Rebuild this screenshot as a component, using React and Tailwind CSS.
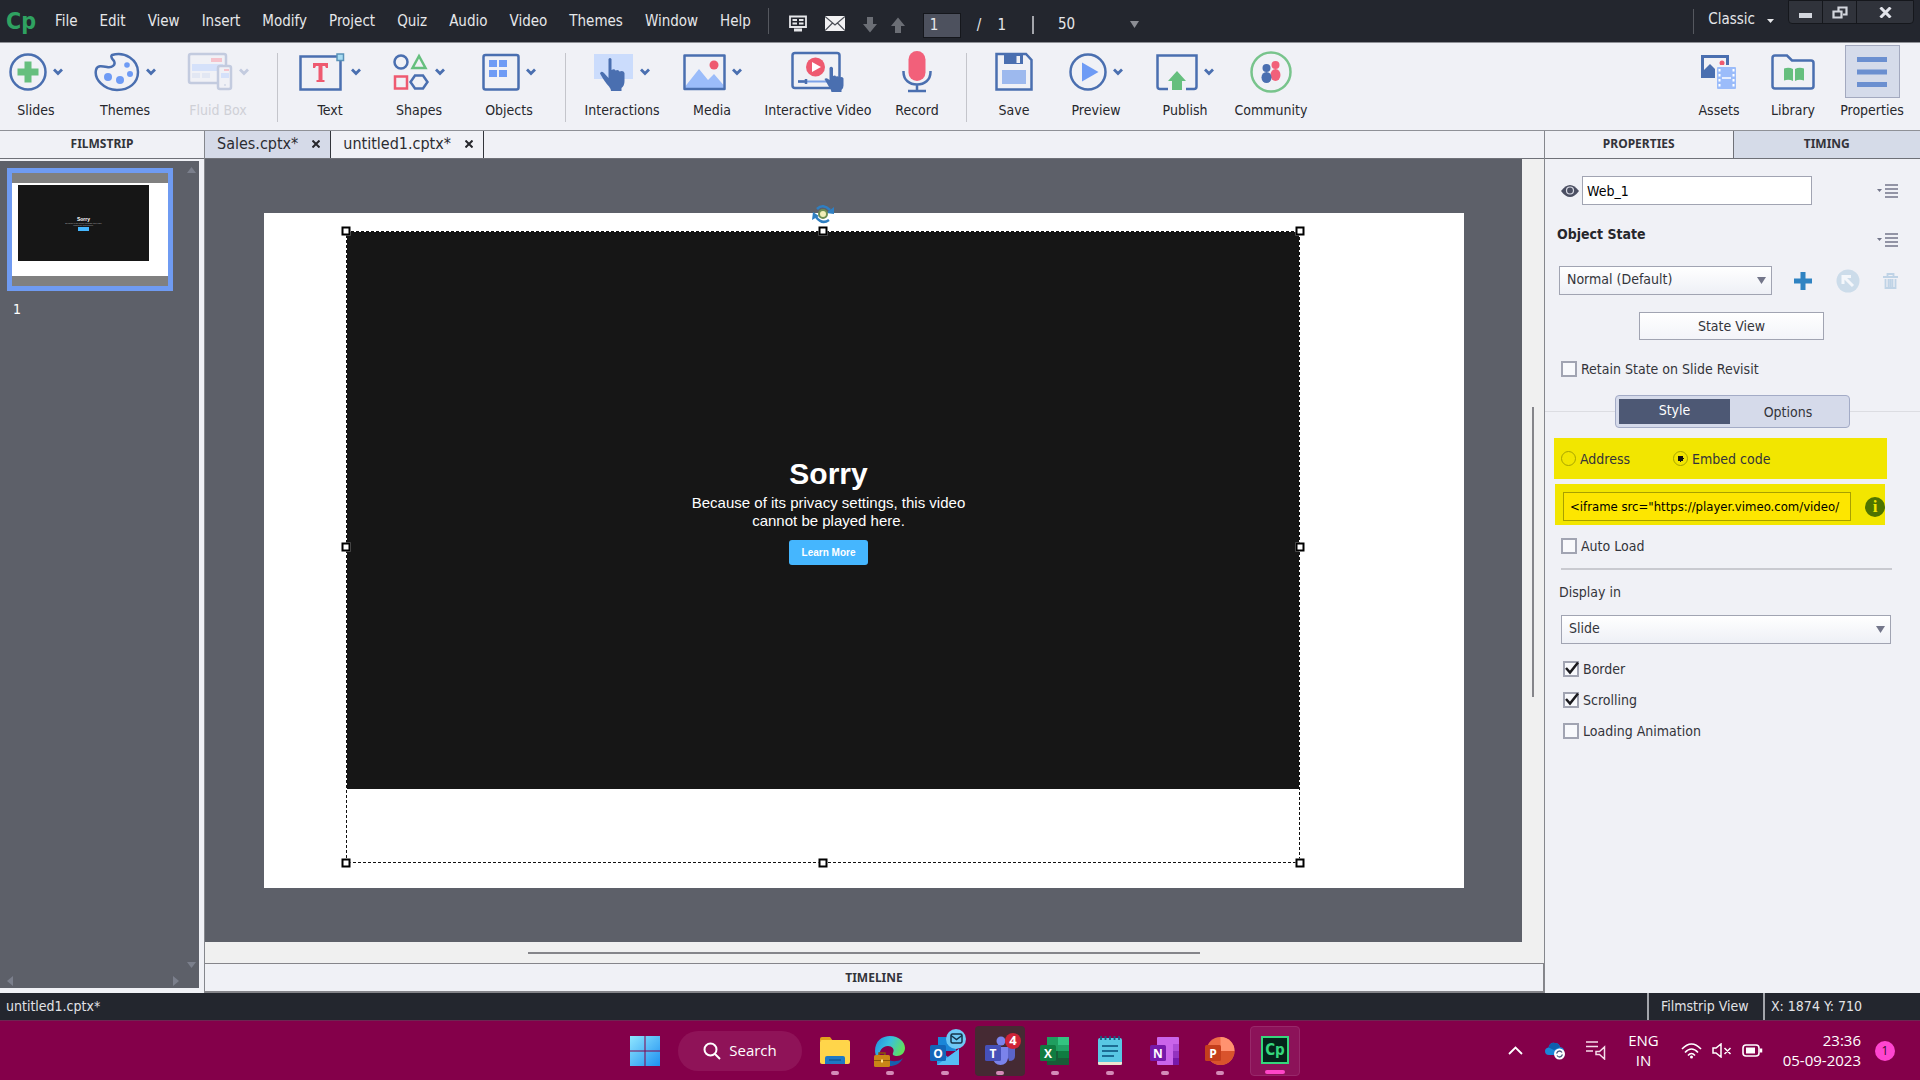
import React, { useState } from "react";

const menus = ["File", "Edit", "View", "Insert", "Modify", "Project", "Quiz", "Audio", "Video", "Themes", "Window", "Help"];

const uiFont = "font-['DejaVu_Sans_Condensed','DejaVu_Sans',sans-serif]";

const icons = {
  slides: (
    <svg width="38" height="40" viewBox="0 0 38 40" fill="none">
      <circle cx="19" cy="20" r="17.5" stroke="#4a6fb0" strokeWidth="2.5" />
      <path d="M15.5 9.500h7v7h7v7h-7v7h-7v-7h-7v-7h7z" fill="#66bf7e" />
    </svg>
  ),
  themes: (
    <svg width="46" height="40" viewBox="0 0 46 40" fill="none">
      <path d="M18 3C31 -1 44 8 44 20C44 31 35 38 23 38C10 38 0 27 2 18C3 13 8 14 13 15C18 16 22 13 20 9C18 7 16 5 18 3Z" stroke="#4a6fb0" strokeWidth="2.5" />
      <circle cx="14" cy="25" r="4" fill="#6e9bf5" />
      <circle cx="26" cy="28" r="4" fill="#6e9bf5" />
      <circle cx="36" cy="22" r="3" fill="#6e9bf5" />
      <circle cx="33" cy="13" r="2.800" fill="#6e9bf5" />
    </svg>
  ),
  fluid: (
    <svg width="46" height="40" viewBox="0 0 46 40" fill="none">
      <rect x="2" y="2" width="37" height="29" rx="2" stroke="#c3cbdf" strokeWidth="2.500" />
      <path d="M24 6h11v4H24z" fill="#f5c3cc" />
      <path d="M5 12h31v7H5z" fill="#d5e1fa" />
      <path d="M5 21h8v5H5zM15 21h8v5h-8z" fill="#e2e7f3" />
      <rect x="31" y="14" width="13" height="23" rx="2" fill="#f0f1f6" stroke="#c3cbdf" strokeWidth="2.500" />
      <path d="M37 17h5v2h-5z" fill="#f5c3cc" />
      <path d="M34 21h8v5h-8z" fill="#d5e1fa" />
      <path d="M37 33h2" stroke="#c3cbdf" />
    </svg>
  ),
  text: (
    <svg width="46" height="40" viewBox="0 0 46 40" fill="none">
      <path d="M1.500 4.500h40v33h-40z" stroke="#4a6fb0" strokeWidth="2.500" />
      <path d="M14 11h15v5h-2l-1-2h-2.500v14h2v2h-8v-2h2V14H17l-1 2h-2z" fill="#ee5a70" />
      <path d="M38 2h6.500v6.500H38z" fill="#a8dcf2" stroke="#5a92b8" strokeWidth="1.500" />
    </svg>
  ),
  shapes: (
    <svg width="36" height="40" viewBox="0 0 36 40" fill="none" strokeWidth="2.500">
      <circle cx="8" cy="10" r="6.500" stroke="#4a6fb0" />
      <path d="M26 4l6.500 12h-13z" stroke="#66bf7e" />
      <path d="M2 24.500h12v12H2z" stroke="#ee5a70" />
      <path d="M22 23.500h8l4.500 6.500-4.500 6.500h-8L17.500 30z" stroke="#4a6fb0" />
    </svg>
  ),
  objects: (
    <svg width="38" height="40" viewBox="0 0 38 40" fill="none">
      <rect x="1.500" y="3" width="35" height="34.500" rx="2" stroke="#4a6fb0" strokeWidth="2.500" />
      <path d="M7 8h8v7H7zM17 8h8v7h-8zM7 18h8v7H7zM17 18h8v7h-8z" fill="#6e9bf5" />
    </svg>
  ),
  interactions: (
    <svg width="40" height="40" viewBox="0 0 40 40">
      <path d="M0 2h39v25H0z" fill="#cbdcfc" />
      <path d="M14.500 7q1.500-2 3 0v11q3-1.500 4 .5 3-1.500 4 1 4-1.500 5 1.500v8q0 5-3 7v3H17q0-2-2-4.500-4-4-9-13 1-3 4-.5l4.500 5z" fill="#4a6fb0" />
    </svg>
  ),
  media: (
    <svg width="43" height="40" viewBox="0 0 43 40" fill="none">
      <path d="M2.500 34L16 17l9 11 6-6 9.500 11v3h-38z" fill="#9bbcfa" />
      <path d="M1.500 3.500h40V37h-40z" stroke="#4a6fb0" strokeWidth="2.500" strokeLinejoin="round" />
      <circle cx="31" cy="13" r="4.500" fill="#ee5a70" />
    </svg>
  ),
  video: (
    <svg width="54" height="42" viewBox="0 0 54 42" fill="none">
      <rect x="1.500" y="2" width="47" height="35" rx="2.500" stroke="#4a6fb0" strokeWidth="2.500" />
      <circle cx="24.500" cy="16" r="9.500" fill="#ee5a70" />
      <path d="M21 11l9 5-9 5z" fill="#fff" />
      <path d="M7 30.500h30" stroke="#7da2e8" strokeWidth="2" />
      <path d="M7 30.500h9M15 28v5" stroke="#4a6fb0" strokeWidth="2.500" />
      <path d="M38.500 17q1.500-2.500 3.500 0v8q2.500-1 3 .5 2.500-1 3 1 4-1.500 4.500 1v7q0 3-2 4.500V41h-10q-1-4-3-6l-4-7q2-2 5 1z" fill="#4a6fb0" />
    </svg>
  ),
  record: (
    <svg width="30" height="42" viewBox="0 0 30 42" fill="none">
      <rect x="6.500" y="0" width="17" height="30" rx="8.500" fill="#f2607a" />
      <path d="M1.500 20v1c0 8 6 12.500 13.500 12.500S28.500 29 28.500 21v-1M15 33.500V40M6 40h18" stroke="#4a6fb0" strokeWidth="2.500" />
    </svg>
  ),
  save: (
    <svg width="38" height="40" viewBox="0 0 38 40" fill="none">
      <path d="M1.500 2H31l5.500 6v29.500h-35z" stroke="#4a6fb0" strokeWidth="2.500" />
      <path d="M9 2h19v10H9z" fill="#4a6fb0" />
      <path d="M21.500 4H25v7h-3.500z" fill="#f0f1f6" />
      <path d="M7 18h24v14H7z" fill="#9db9ee" />
    </svg>
  ),
  preview: (
    <svg width="38" height="40" viewBox="0 0 38 40" fill="none">
      <circle cx="19" cy="20" r="17.500" stroke="#4a6fb0" strokeWidth="2.500" />
      <path d="M13 10.500L29.500 20 13 29.500z" fill="#6e9bf5" />
    </svg>
  ),
  publish: (
    <svg width="42" height="40" viewBox="0 0 42 40" fill="none">
      <path d="M12 37H4q-2.500 0-2.500-2.500V3.500h39v31q0 2.500-2.500 2.500h-8" stroke="#4a6fb0" strokeWidth="2.500" />
      <path d="M21 19l9 10h-4v9H16v-9h-4z" fill="#66bf7e" />
    </svg>
  ),
  community: (
    <svg width="42" height="42" viewBox="0 0 42 42" fill="none">
      <circle cx="21" cy="21" r="19.500" stroke="#78c48c" strokeWidth="2.500" />
      <circle cx="25.500" cy="14" r="4" fill="#f2607a" />
      <ellipse cx="25.500" cy="24" rx="5" ry="6" fill="#f2607a" />
      <circle cx="16.500" cy="17" r="4" fill="#4a6fb0" />
      <ellipse cx="16.500" cy="26.500" rx="5" ry="5.500" fill="#4a6fb0" />
    </svg>
  ),
  assets: (
    <svg width="36" height="36" viewBox="0 0 36 36">
      <path fillRule="evenodd" d="M0 1h28v23H0zM3 4h22v12l-12 0-4-4-6 5z" fill="#4a6fb0" />
      <path d="M3 16l6-6 5 5v9H3z" fill="#4a6fb0" />
      <circle cx="21" cy="9" r="2.500" fill="#ee5a70" />
      <rect x="14" y="11" width="22" height="24" fill="#f0f1f6" />
      <rect x="16" y="13" width="19" height="22" rx="1" fill="#9bbcfa" />
      <path d="M18.500 15v18M32.500 15v18" stroke="#fff" strokeWidth="2" strokeDasharray="2.500 2.500" />
      <path d="M21 24h9" stroke="#fff" strokeWidth="1.500" />
    </svg>
  ),
  library: (
    <svg width="44" height="36" viewBox="0 0 44 36" fill="none">
      <path d="M4 1.500h12l5 5h19q2.500 0 2.500 2.500v23q0 2.500-2.500 2.500H4q-2.500 0-2.500-2.500V4Q1.500 1.500 4 1.500z" stroke="#4a6fb0" strokeWidth="2.500" />
      <path d="M13 14.500q5-1.500 9 .5v12q-4-2-9-.5zM24 15q4-2 9-.5v12q-5-1.500-9 .5z" fill="#66bf7e" />
    </svg>
  ),
  properties: (
    <svg width="30" height="32" viewBox="0 0 30 32">
      <path d="M0 1h30v5H0zM0 13.500h30v5H0zM0 26h30v5H0z" fill="#6b8fd0" />
    </svg>
  ),
};

const tools = [
  { label: "Slides", icon: "slides", caret: true, width: "w-[72px]" },
  { label: "Themes", icon: "themes", caret: true, width: "w-[106px]" },
  { label: "Fluid Box", icon: "fluid", caret: true, width: "w-[80px]", disabled: true },
  { divider: true, width: "w-[38px]" },
  { label: "Text", icon: "text", caret: true, width: "w-[68px]" },
  { label: "Shapes", icon: "shapes", caret: true, width: "w-[110px]" },
  { label: "Objects", icon: "objects", caret: true, width: "w-[70px]" },
  { divider: true, width: "w-[42px]" },
  { label: "Interactions", icon: "interactions", caret: true, width: "w-[72px]" },
  { label: "Media", icon: "media", caret: true, width: "w-[108px]" },
  { label: "Interactive Video", icon: "video", width: "w-[104px]" },
  { label: "Record", icon: "record", width: "w-[94px]" },
  { divider: true, width: "w-[4px]" },
  { label: "Save", icon: "save", width: "w-[92px]" },
  { label: "Preview", icon: "preview", caret: true, width: "w-[72px]" },
  { label: "Publish", icon: "publish", caret: true, width: "w-[106px]" },
  { label: "Community", icon: "community", width: "w-[66px]" },
];

const rightTools = [
  { label: "Assets", icon: "assets", width: "w-[74px]" },
  { label: "Library", icon: "library", width: "w-[74px]" },
  { label: "Properties", icon: "properties", width: "w-[84px]", active: true },
];

function Tool({ tool }) {
  if (tool.divider) {
    return (
      <div className={`flex shrink-0 justify-center py-2 ${tool.width}`}>
        <div className="w-px bg-[#c4c5cb]" />
      </div>
    );
  }
  return (
    <button disabled={tool.disabled} className={`flex shrink-0 flex-col items-center whitespace-nowrap ${tool.width}`}>
      <span
        className={`flex h-[53px] items-center gap-1.5 ${tool.active ? "w-[55px] justify-center border border-[#a3a9bf] bg-[#d5dbea]" : ""}`}
      >
        {icons[tool.icon]}
        {tool.caret && (
          <svg width="10" height="8" viewBox="0 0 10 8" fill="none">
            <path d="M1 1.500l4 4 4-4" stroke={tool.disabled ? "#c3cbdf" : "#4a6fb0"} strokeWidth="2.800" />
          </svg>
        )}
      </span>
      <span className={`pt-[3px] text-[14px] leading-[18px] ${tool.disabled ? "text-[#cfd0d6]" : "text-[#26272c]"}`}>{tool.label}</span>
    </button>
  );
}

function TitleBar() {
  return (
    <header className="flex h-[42px] shrink-0 items-center bg-[#23262e] text-[15px] leading-5 text-[#e6e7ea]">
      <span className="w-[44px] pl-1.5 text-[23px] leading-6 font-bold text-[#2fa261]">Cp</span>
      <nav className="flex">
        {menus.map((menu) => (
          <button key={menu} className="px-[11px]">
            {menu}
          </button>
        ))}
      </nav>
      <div className="ml-1.5 h-[26px] w-px bg-[#55585f]" />
      <div className="flex items-center gap-[18px] pt-1 pl-5">
        <button aria-label="Layout">
          <svg width="18" height="17" viewBox="0 0 18 17" fill="none" stroke="#e6e7ea" strokeWidth="1.800">
            <path d="M1 1.500h16v10.500H1zM3.500 5h4.500M10 5h4.500M3.500 8.500h4.500M10 8.500h4.500" />
            <path d="M5 15h8" strokeWidth="3" />
          </svg>
        </button>
        <button aria-label="Mail">
          <svg width="20" height="15" viewBox="0 0 20 15" fill="none">
            <path d="M0 0h20v15H0z" fill="#f2f2f4" />
            <path d="M0 .5l10 8.500L20 .5M0 14.500L7.500 7M20 14.500L12.500 7" stroke="#4b4e56" strokeWidth="1.200" />
          </svg>
        </button>
        <div className="flex items-center gap-[14px] pt-1">
          <svg width="14" height="16" viewBox="0 0 14 16" fill="#6b6e75">
            <path d="M4 0h6v7h4l-7 8.500L0 7h4z" />
          </svg>
          <svg width="14" height="16" viewBox="0 0 14 16" fill="#6b6e75">
            <path d="M4 16h6V9h4L7 .5 0 9h4z" />
          </svg>
        </div>
        <div className="flex items-center pt-1">
          <input aria-label="Slide number" defaultValue="1" className="h-[25px] w-[38px] border border-[#15171c] bg-[#4d515e] pl-1.5" />
          <span className="pl-4">/</span>
          <span className="pl-4">1</span>
        </div>
      </div>
      <div className="mt-2 ml-[26px] h-[18px] w-[2px] bg-[#a3a5ab]" />
      <div className="flex items-center pt-1.5 pl-6">
        <select aria-label="Zoom" className="w-[72px] appearance-none bg-transparent">
          <option>50</option>
        </select>
        <svg width="9" height="7" viewBox="0 0 9 7" fill="#8b8d94">
          <path d="M0 0h9L4.500 7z" />
        </svg>
      </div>
      <div className="grow" />
      <div className="h-[25px] w-px bg-[#55585f]" />
      <button className="flex items-center gap-3 px-3.5 pb-1">
        Classic
        <svg width="7" height="4" viewBox="0 0 7 4" fill="#e6e7ea" className="mt-1">
          <path d="M0 0h7L3.500 4z" />
        </svg>
      </button>
      <div className="mr-1.5 flex h-6 self-start rounded-b-sm border border-[#15171c] bg-[#30333b]">
        <button aria-label="Minimize" className="w-[34px] border-r border-[#15171c]">
          <svg width="13" height="5" viewBox="0 0 13 5" className="mx-auto mt-1.5">
            <path d="M0 0h13v5H0z" fill="#d3d6dd" />
          </svg>
        </button>
        <button aria-label="Restore" className="w-[34px] border-r border-[#15171c]">
          <svg width="16" height="13" viewBox="0 0 16 13" fill="none" stroke="#d3d6dd" strokeWidth="2.200" className="mx-auto">
            <path d="M6.500 5V1.500H14.500V8.500H11" />
            <path d="M1.500 5.500h8v6h-8z" />
          </svg>
        </button>
        <button aria-label="Close" className="w-[56px]">
          <svg width="13" height="11" viewBox="0 0 13 11" stroke="#e2e4ea" strokeWidth="3" className="mx-auto">
            <path d="M1.500 .5l10 10M11.500 .5l-10 10" />
          </svg>
        </button>
      </div>
    </header>
  );
}

function FilmStrip() {
  return (
    <aside className="flex w-[205px] shrink-0 flex-col border-r border-[#85878d] bg-[#f0f1f6]">
      <h2 className="flex h-[28px] shrink-0 items-center justify-center border-b border-[#6f7178] pb-0.5 text-[12px] font-bold text-[#33343a] font-['Noto_Sans',sans-serif]">
        FILMSTRIP
      </h2>
      <div className="mt-0.5 mr-[5px] mb-[5px] flex grow bg-[#5d6069]">
        <div className="flex grow flex-col justify-between pt-[7px] pl-[7px]">
          <button aria-label="Slide 1" className="block w-[166px] text-left">
            <span className="block border-[5px] border-[#6f9bf2] bg-[#808080] py-[10px]">
              <span className="block h-[93px] bg-white pt-0.5 pl-[6px]">
                <span className="flex h-[76px] w-[131px] flex-col items-center justify-center bg-[#161616] text-white font-['Liberation_Sans',sans-serif]">
                  <span className="text-[5px] leading-[6px] font-bold">Sorry</span>
                  <span className="text-center text-[2px] leading-[2px] text-[#aaa]">
                    Because of its privacy settings, this video
                    <br />
                    cannot be played here.
                  </span>
                  <span className="mt-px h-[4px] w-[11px] bg-[#45b6fe]" />
                </span>
              </span>
            </span>
            <span className="block pt-2 pl-1.5 text-[14px] leading-5 text-white">1</span>
          </button>
          <div className="flex justify-between pr-1 pb-0.5">
            <svg width="6" height="10" viewBox="0 0 6 10" fill="#7b7f8c"><path d="M6 0v10L0 5z" /></svg>
            <svg width="6" height="10" viewBox="0 0 6 10" fill="#7b7f8c"><path d="M0 0v10l6-5z" /></svg>
          </div>
        </div>
        <div className="flex w-[16px] flex-col items-center justify-between pt-1.5 pb-5">
          <svg width="9" height="6" viewBox="0 0 9 6" fill="#7b7f8c"><path d="M0 6h9L4.500 0z" /></svg>
          <svg width="9" height="6" viewBox="0 0 9 6" fill="#7b7f8c"><path d="M0 0h9L4.500 6z" /></svg>
        </div>
      </div>
    </aside>
  );
}

const handles = [
  "left-0 top-0",
  "left-1/2 top-0",
  "left-full top-0",
  "left-0 top-1/2",
  "left-full top-1/2",
  "left-0 top-full",
  "left-1/2 top-full",
  "left-full top-full",
];

function Stage() {
  return (
    <div className="flex grow items-center justify-center overflow-hidden bg-[#5d6069]">
      <div className="relative aspect-video w-[1200px] shrink-0 bg-white">
        <div className="absolute top-[18px] left-[82px] h-[632px] w-[954px]">
          <div className="flex h-[558px] flex-col items-center bg-[#161616] pt-[225px] pl-3 text-white font-['Liberation_Sans',sans-serif]">
            <h1 className="text-[30px] leading-9 font-bold">Sorry</h1>
            <p className="pt-0.5 text-center text-[15px] leading-[18px]">
              Because of its privacy settings, this video
              <br />
              cannot be played here.
            </p>
            <button className="mt-2.5 h-[25px] w-[79px] rounded-[3px] bg-[#45b6fe] text-[10px] font-bold">Learn More</button>
          </div>
          <svg className="absolute inset-0 h-full w-full" fill="none">
            <rect x="0" y="0" width="100%" height="100%" stroke="#fff" strokeWidth="2" />
            <rect x="0" y="0" width="100%" height="100%" stroke="#111" strokeWidth="2" strokeDasharray="3 2" />
          </svg>
          {handles.map((pos) => (
            <span key={pos} className={`absolute size-[9px] -translate-1/2 border-2 border-black bg-white ${pos}`} />
          ))}
          <svg width="24" height="20" viewBox="0 0 24 20" fill="none" className="absolute -top-[27px] left-1/2 -translate-x-1/2">
            <path d="M6 5q6-6 13 1M18 16q-7 5-13-3" stroke="#2f7fc2" strokeWidth="2.500" />
            <path d="M15 9l8 1V3zM1 16l1-8 6 4z" fill="#2f7fc2" />
            <circle cx="12" cy="10" r="4" fill="#f3efb8" stroke="#6f8f52" strokeWidth="2" />
          </svg>
        </div>
      </div>
    </div>
  );
}

function DocTab({ name, active }) {
  return (
    <div className={`flex items-center gap-3.5 border-r border-[#33353b] pr-2.5 pb-0.5 pl-3 text-[16px] text-[#2b2c31] ${active ? "" : "bg-[#d5dae8]"}`}>
      <button className="leading-5">{name}</button>
      <button aria-label={`Close ${name}`}>
        <svg width="8" height="8" viewBox="0 0 8 8" stroke="#26272c" strokeWidth="2">
          <path d="M.5 .5l7 7M7.500 .5l-7 7" />
        </svg>
      </button>
    </div>
  );
}

function Workspace() {
  return (
    <main className="flex min-w-0 grow flex-col">
      <div className="flex h-[28px] shrink-0 border-b border-[#6f7178] bg-[#f0f1f6]">
        <DocTab name="Sales.cptx*" />
        <DocTab name="untitled1.cptx*" active />
      </div>
      <div className="flex grow">
        <Stage />
        <div className="flex w-[22px] shrink-0 flex-col items-center bg-[#f0f0f0]">
          <div className="mt-[248px] h-[290px] w-[2px] bg-[#85858a]" />
        </div>
      </div>
      <div className="flex h-[22px] shrink-0 items-center border-b border-[#85858a] bg-[#f0f0f0]">
        <div className="ml-[323px] h-[2px] w-[672px] bg-[#85858a]" />
      </div>
      <button className="h-[29px] shrink-0 border-r border-b-2 border-[#85858a] bg-[#f0f1f6] text-[12px] font-bold text-[#33343a] font-['Noto_Sans',sans-serif]">
        TIMELINE
      </button>
    </main>
  );
}

function CheckBox({ label, checked }) {
  const [on, setOn] = useState(Boolean(checked));
  return (
    <label className="flex items-center gap-1">
      <span className="relative block size-4">
        <input
          type="checkbox"
          checked={on}
          onChange={() => setOn(!on)}
          className="block size-4 appearance-none border-2 border-[#a1a4b2] bg-[#f8f9fc]"
        />
        {on && (
          <svg width="16" height="16" viewBox="0 0 16 16" fill="none" className="pointer-events-none absolute inset-0">
            <path d="M3 7l4 4.500L15 1.500" stroke="#1a1a1e" strokeWidth="2.500" />
          </svg>
        )}
      </span>
      {label}
    </label>
  );
}

function Radio({ label, checked, onChange }) {
  return (
    <label className="flex items-center gap-1">
      <input
        type="radio"
        name="source"
        checked={checked}
        onChange={onChange}
        className="size-[15px] appearance-none rounded-full border border-[#a8a400] checked:bg-[radial-gradient(circle,#111_3px,transparent_3px)]"
      />
      {label}
    </label>
  );
}

function DropDown({ label, value, className }) {
  return (
    <span className={`relative block ${className}`}>
      <select
        aria-label={label}
        className="block h-[29px] w-full appearance-none border border-[#a1a4b2] bg-linear-to-b from-white to-[#eef0f6] pb-1 pl-[7px]"
      >
        <option>{value}</option>
      </select>
      <svg width="9" height="7" viewBox="0 0 9 7" fill="#73768a" className="pointer-events-none absolute top-[11px] right-[6px]">
        <path d="M0 0h9L4.500 7z" />
      </svg>
    </span>
  );
}

function MenuIcon() {
  return (
    <button aria-label="Panel menu" className="ml-auto">
      <svg width="21" height="14" viewBox="0 0 21 14" stroke="#73768a" strokeWidth="1.500">
        <path d="M0 5h5L2.500 8z" fill="#73768a" stroke="none" />
        <path d="M8 1h13M8 5h13M8 9h13M8 13h13" />
      </svg>
    </button>
  );
}

function PropertiesPanel() {
  const [source, setSource] = useState("embed");
  const tab = "flex w-1/2 items-center justify-center border-b border-[#6f7178] pb-0.5";
  return (
    <aside className="flex w-[376px] shrink-0 flex-col border-l border-[#85878d] bg-[#f0f1f6]">
      <div className="flex h-[28px] shrink-0 text-[12px] font-bold text-[#33343a] font-['Noto_Sans',sans-serif]">
        <button className={tab}>PROPERTIES</button>
        <button className={`${tab} border-l bg-[#d5dbe8]`}>TIMING</button>
      </div>
      <div className="flex flex-col pt-[17px] text-[14px] leading-[18px] text-[#33343a]">
        <div className="flex items-center pr-[22px] pl-4">
          <svg width="18" height="12" viewBox="0 0 18 12">
            <path d="M0 6Q9-6 18 6 9 18 0 6z" fill="#4b4f62" />
            <circle cx="9" cy="5.500" r="3.500" fill="none" stroke="#d8dae4" strokeWidth="1.200" />
          </svg>
          <input aria-label="Object name" defaultValue="Web_1" className="ml-[3px] h-[29px] w-[230px] border border-[#a1a4b2] bg-white pl-1 text-black" />
          <MenuIcon />
        </div>
        <div className="flex items-end pt-5 pr-[22px] pl-3">
          <h3 className="pb-1 font-bold text-[#26272c]">Object State</h3>
          <MenuIcon />
        </div>
        <div className="flex items-center pt-[19px] pr-[22px] pl-[14px]">
          <DropDown label="Object state" value="Normal (Default)" className="w-[213px]" />
          <button aria-label="Add state" className="ml-[22px]">
            <svg width="18" height="18" viewBox="0 0 18 18" fill="#2f83c2"><path d="M6.500 0h5v6.500H18v5h-6.500V18h-5v-6.500H0v-5h6.500z" /></svg>
          </button>
          <button aria-label="Reset state" className="ml-6">
            <svg width="24" height="24" viewBox="0 0 24 24" fill="none">
              <circle cx="12" cy="12" r="11.500" fill="#ccdcea" />
              <path d="M7 15V7.500h8M8 8l9 9" stroke="#f4f7fb" strokeWidth="3" />
            </svg>
          </button>
          <button aria-label="Delete state" className="ml-auto">
            <svg width="15" height="16" viewBox="0 0 15 16" fill="none" stroke="#bfd3e6" strokeWidth="1.800">
              <path d="M0 4h15M4.500 3V1h6v2M2.500 6v9h10V6M5.500 6v8M7.500 6v8M9.500 6v8" />
            </svg>
          </button>
        </div>
        <button className="mt-[17px] ml-[94px] h-[28px] w-[185px] border border-[#a1a4b2] bg-linear-to-b from-white to-[#f3f4f9]">State View</button>
        <div className="pt-[20px] pl-4">
          <CheckBox label="Retain State on Slide Revisit" />
        </div>
        <div className="flex items-center pt-[17px]">
          <div className="h-px w-[70px] bg-[#dcdde2]" />
          <div className="flex h-[33px] w-[235px] rounded-sm border border-[#a3abc6] bg-[#d5daea] p-[3px]">
            <button className="w-[111px] bg-[#4d5874] pb-1 text-white">Style</button>
            <button className="grow">Options</button>
          </div>
          <div className="h-px grow bg-[#dcdde2]" />
        </div>
        <div className="mt-2.5 ml-[9px] flex h-[41px] w-[333px] items-center gap-[43px] bg-[#f2e600] pl-[7px]">
          <Radio label="Address" checked={source === "address"} onChange={() => setSource("address")} />
          <Radio label="Embed code" checked={source === "embed"} onChange={() => setSource("embed")} />
        </div>
        <div className="mt-[5px] ml-2.5 flex h-[41px] w-[330px] items-end justify-between bg-[#f2e600] pb-1 pl-2">
          <input
            aria-label="Embed code"
            defaultValue={'<iframe src="https://player.vimeo.com/video/'}
            className="h-[29px] w-[288px] border border-[#a8a000] bg-[#fde600] pl-1.5 text-[13px] text-black"
          />
          <span className="mb-1 flex size-5 items-center justify-center rounded-full bg-[#4e7400] text-[17px] font-bold text-[#f2e600] font-['Liberation_Serif',serif]">i</span>
        </div>
        <div className="pt-3 pl-4">
          <CheckBox label="Auto Load" />
        </div>
        <hr className="mt-[13px] mr-7 ml-4 border-t-2 border-[#c9cad0]" />
        <span className="pt-[13px] pl-[14px]">Display in</span>
        <DropDown label="Display in" value="Slide" className="mt-[14px] mr-[29px] ml-4" />
        <div className="flex flex-col gap-[13px] pt-4 pl-[18px]">
          <CheckBox label="Border" checked />
          <CheckBox label="Scrolling" checked />
          <CheckBox label="Loading Animation" />
        </div>
      </div>
    </aside>
  );
}

function OfficeIcon({ letter, tile, children }) {
  return (
    <svg width="30" height="30" viewBox="0 0 30 30">
      {children}
      <rect x="0" y="9" width="16" height="16" rx="1.500" fill={tile} />
      <text x="8" y="21.500" textAnchor="middle" fontSize="12" fontWeight="bold" fill="#fff" fontFamily="Open Sans, sans-serif">{letter}</text>
    </svg>
  );
}

const apps = [
  {
    name: "File Explorer",
    icon: (
      <svg width="30" height="30" viewBox="0 0 30 30">
        <path d="M0 3q0-2 2-2h8l3 4H0z" fill="#e0a11c" />
        <rect y="4" width="30" height="24" rx="2" fill="#ffd54a" />
        <path d="M5 28v-6q0-2 2-2h16q2 0 2 2v6z" fill="#1f79c4" />
        <path d="M9 24h12" stroke="#12589a" strokeWidth="1.500" />
      </svg>
    ),
  },
  {
    name: "Edge",
    icon: (
      <svg width="32" height="32" viewBox="0 0 32 32">
        <defs>
          <linearGradient id="edge" x1="0" y1="0" x2="1" y2="0.400">
            <stop offset="0" stopColor="#2389dc" />
            <stop offset="0.500" stopColor="#38bfe0" />
            <stop offset="1" stopColor="#62e05c" />
          </linearGradient>
        </defs>
        <path d="M1 16C1 6 8 1 16 1c9 0 15 6 15 12 0 5-4 8-8 8-3 0-5-1-4-3 2-4-1-7-5-7-6 0-9 5-9 11v3Q1 21 1 16z" fill="url(#edge)" />
        <path d="M11 18c0 6 6 9 11 8 3 0 5-1 7-3-3 6-8 8-13 8C9 31 7 22 11 18z" fill="#155fae" />
        <rect x="0" y="20" width="16" height="12" rx="1.500" fill="#c98516" />
        <path d="M0 25.500h16" stroke="#8a5608" />
        <path d="M5 20v-2h6v2" fill="none" stroke="#8a5608" strokeWidth="1.500" />
        <path d="M7 24.500h2v3H7z" fill="#ffe08a" />
      </svg>
    ),
  },
  {
    name: "Outlook",
    badge: "mail",
    icon: (
      <OfficeIcon letter="O" tile="#1366b8">
        <path d="M8 1h18v14H8z" fill="#1a86d8" />
        <path d="M17 1h9v7h-9z" fill="#4cc3f5" />
        <path d="M7 13l11 8 11-8v16H7z" fill="#2c9be8" />
        <path d="M29 13v16H7z" fill="#56bdf5" />
      </OfficeIcon>
    ),
  },
  {
    name: "Teams",
    badge: "4",
    tile: "bg-[#452a33]",
    icon: (
      <OfficeIcon letter="T" tile="#4650b8">
        <circle cx="16" cy="5" r="4.500" fill="#7b83eb" />
        <circle cx="25" cy="7" r="3" fill="#5b64c8" />
        <path d="M20 11h10v9q0 5-6 5z" fill="#5b64c8" />
        <path d="M8 11h15v11q-1 7-7.500 7T8 22z" fill="#7b83eb" />
      </OfficeIcon>
    ),
  },
  {
    name: "Excel",
    icon: (
      <OfficeIcon letter="X" tile="#107c41">
        <path d="M7 1h11v28H7z" fill="#1f9e5f" />
        <path d="M18 1h11v8H18z" fill="#33c481" />
        <path d="M18 9h11v6H18z" fill="#21a366" />
        <path d="M7 15h22v14H7z" fill="#185c37" />
        <path d="M18 15h11v7H18z" fill="#107c41" />
      </OfficeIcon>
    ),
  },
  {
    name: "Notepad",
    icon: (
      <svg width="24" height="30" viewBox="0 0 24 30">
        <rect x="0" y="2" width="24" height="27" rx="2" fill="#58c8e4" />
        <path d="M0 26h24v2q0 1-2 1H2q-2 0-2-1z" fill="#f0e4d0" />
        <path d="M3 0v4M7.500 0v4M12 0v4M16.500 0v4M21 0v4" stroke="#1a5a80" strokeWidth="1.800" />
        <path d="M4 10h16M4 15h16M4 20h12" stroke="#1c6d94" strokeWidth="2" />
      </svg>
    ),
  },
  {
    name: "OneNote",
    icon: (
      <OfficeIcon letter="N" tile="#7719aa">
        <rect x="7" y="1" width="22" height="28" rx="1" fill="#ca64ea" />
        <path d="M23 8h6v7h-6z" fill="#ae4bd5" />
        <path d="M23 15h6v7h-6z" fill="#9332bf" />
        <path d="M23 22h6v7h-6z" fill="#7719aa" />
      </OfficeIcon>
    ),
  },
  {
    name: "PowerPoint",
    icon: (
      <OfficeIcon letter="P" tile="#c43e1c">
        <circle cx="15.500" cy="15" r="14" fill="#ed6c47" />
        <path d="M15.500 1a14 14 0 0 1 14 14h-14z" fill="#ff9270" />
        <path d="M1.500 15h28a14 14 0 0 1-28 0z" fill="#d9532c" />
      </OfficeIcon>
    ),
  },
  {
    name: "Captivate",
    tile: "border border-[#98286a] bg-[#8c1259]",
    current: true,
    icon: (
      <svg width="28" height="28" viewBox="0 0 28 28">
        <path d="M1 1h26v26H1z" fill="#04231a" stroke="#35d67c" strokeWidth="2" />
        <text x="14" y="19" textAnchor="middle" fontSize="15" fontWeight="bold" fill="#35d67c" fontFamily="DejaVu Sans Condensed, sans-serif">Cp</text>
      </svg>
    ),
  },
];

function TaskBar() {
  return (
    <footer className="grid h-[60px] shrink-0 grid-cols-[1fr_auto_1fr] items-center border-t border-[#6d2552] bg-[#84004a] text-white font-['Open_Sans','Noto_Sans',sans-serif]">
      <div />
      <div className="flex items-center">
        <button aria-label="Start" className="w-[50px]">
          <svg width="30" height="30" viewBox="0 0 30 30" className="mx-auto">
            <defs>
              <linearGradient id="win" x1="0" y1="0" x2="1" y2="1">
                <stop offset="0" stopColor="#8fe6ff" />
                <stop offset="1" stopColor="#1e90f0" />
              </linearGradient>
            </defs>
            <path d="M0 0h14.500v14.500H0zM15.500 0H30v14.500H15.500zM0 15.500h14.500V30H0zM15.500 15.500H30V30H15.500z" fill="url(#win)" />
          </svg>
        </button>
        <button className="mx-2 flex h-10 w-[124px] items-center justify-center gap-2 rounded-full bg-[#8f1358] text-[15px]">
          <svg width="18" height="18" viewBox="0 0 18 18" fill="none" stroke="#fff" strokeWidth="2">
            <circle cx="7.500" cy="7.500" r="6" />
            <path d="M12 12l5 5" />
          </svg>
          Search
        </button>
        <div className="flex gap-[5px]">
          {apps.map((app) => (
            <button
              key={app.name}
              aria-label={app.name}
              className={`relative flex h-[50px] w-[50px] flex-col items-center justify-end rounded ${app.tile || ""}`}
            >
              <span className="flex h-8 items-center">{app.icon}</span>
              <span className={`mt-1 mb-px h-1 rounded-full ${app.current ? "w-5 bg-[#ff45c8]" : "w-2 bg-[#d48bb8]"}`} />
              {app.badge === "mail" && (
                <span className="absolute top-[3px] right-[4px] flex size-5 items-center justify-center rounded-full bg-[#6fc8f5]">
                  <svg width="13" height="11" viewBox="0 0 13 11" fill="none" stroke="#14324a" strokeWidth="1.500">
                    <rect x="1" y="1" width="11" height="9" rx="1.500" />
                    <path d="M1 2.500l5.500 4 5.500-4" />
                  </svg>
                </span>
              )}
              {app.badge === "4" && (
                <span className="absolute top-[7px] right-[4px] flex size-4 items-center justify-center rounded-full bg-[#cf2338] text-[13px] font-bold">4</span>
              )}
            </button>
          ))}
        </div>
      </div>
      <div className="flex items-center justify-end pr-[25px] text-[15px] leading-[20px]">
        <svg width="15" height="9" viewBox="0 0 15 9" fill="none" stroke="#fff" strokeWidth="1.800" className="mr-[22px]">
          <path d="M1 8l6.500-6.500L14 8" />
        </svg>
        <svg width="21" height="18" viewBox="0 0 21 18" fill="none" className="mr-5">
          <path d="M4 13q-4 0-4-4 0-3 3.500-3.500Q5 0 10 1q4 0 5 4 4 .5 4 4t-4 4z" fill="#1a86d8" />
          <path d="M3.500 5.500Q5 0 10 1q4 0 5 4l-6 3z" fill="#0f5fae" />
          <circle cx="14.500" cy="12" r="5.500" fill="#fff" />
          <path d="M11.500 11.500q1-2.500 3-2.500 1.500 0 2.500 1.500M17.500 12.500q-1 2.500-3 2.500-1.500 0-2.500-1.500" stroke="#4a5a80" strokeWidth="1.300" />
        </svg>
        <svg width="20" height="19" viewBox="0 0 20 19" fill="none" stroke="#f6dcea" strokeWidth="1.500" className="mr-[22px]">
          <path d="M0 1h12M0 5.500h12M0 10h7M10 10.500h3.500l5-4.500v12l-5-4.500H10z" />
        </svg>
        <div className="pb-0.5 text-center">
          ENG
          <br />
          IN
        </div>
        <svg width="21" height="16" viewBox="0 0 21 16" fill="none" stroke="#fff" strokeWidth="1.600" className="ml-[22px]">
          <path d="M1 6Q10.500-4 20 6M4 9.500q6.500-7 13 0M7 12.500q3.500-4 7 0" />
          <circle cx="10.500" cy="14" r="1.500" fill="#fff" stroke="none" />
        </svg>
        <svg width="20" height="15" viewBox="0 0 20 15" fill="none" stroke="#fff" strokeWidth="1.500" className="ml-[10px]">
          <path d="M1 5h3l5-4v13l-5-4H1zM12.500 5l6 6M18.500 5l-6 6" />
        </svg>
        <svg width="21" height="13" viewBox="0 0 21 13" fill="none" className="ml-[10px]">
          <rect x="1" y="1" width="16" height="11" rx="3" stroke="#fff" strokeWidth="1.600" />
          <path d="M4 3.500h9v6H4z" fill="#fff" />
          <path d="M19 4.500v4" stroke="#fff" strokeWidth="2.500" />
        </svg>
        <div className="ml-5 pb-0.5 text-right">
          23:36
          <br />
          05-09-2023
        </div>
        <span className="ml-3.5 flex size-5 items-center justify-center rounded-full bg-[#ff45d0] text-[12px] text-[#3a0a28]">1</span>
      </div>
    </footer>
  );
}

export default function App() {
  return (
    <div className={`flex min-h-screen flex-col bg-[#f0f1f6] ${uiFont}`}>
      <TitleBar />
      <div className="flex h-[89px] shrink-0 border-t border-b border-[#8f9197] bg-[#f0f1f6] pt-0.5 pr-1.5">
        {tools.map((tool, i) => (
          <Tool key={i} tool={tool} />
        ))}
        <div className="grow" />
        {rightTools.map((tool) => (
          <Tool key={tool.label} tool={tool} />
        ))}
      </div>
      <div className="flex grow">
        <FilmStrip />
        <Workspace />
        <PropertiesPanel />
      </div>
      <div className="flex h-[27px] shrink-0 items-center bg-[#23262e] pr-[58px] text-[14px] text-[#e2e3e7]">
        <span className="grow pl-1.5">untitled1.cptx*</span>
        <span className="flex h-full w-[116px] items-center border-l-2 border-[#a3a5ab] pl-3">Filmstrip View</span>
        <span className="flex h-full items-center border-l-2 border-[#a3a5ab] pl-1.5">X: 1874 Y: 710</span>
      </div>
      <TaskBar />
    </div>
  );
}
